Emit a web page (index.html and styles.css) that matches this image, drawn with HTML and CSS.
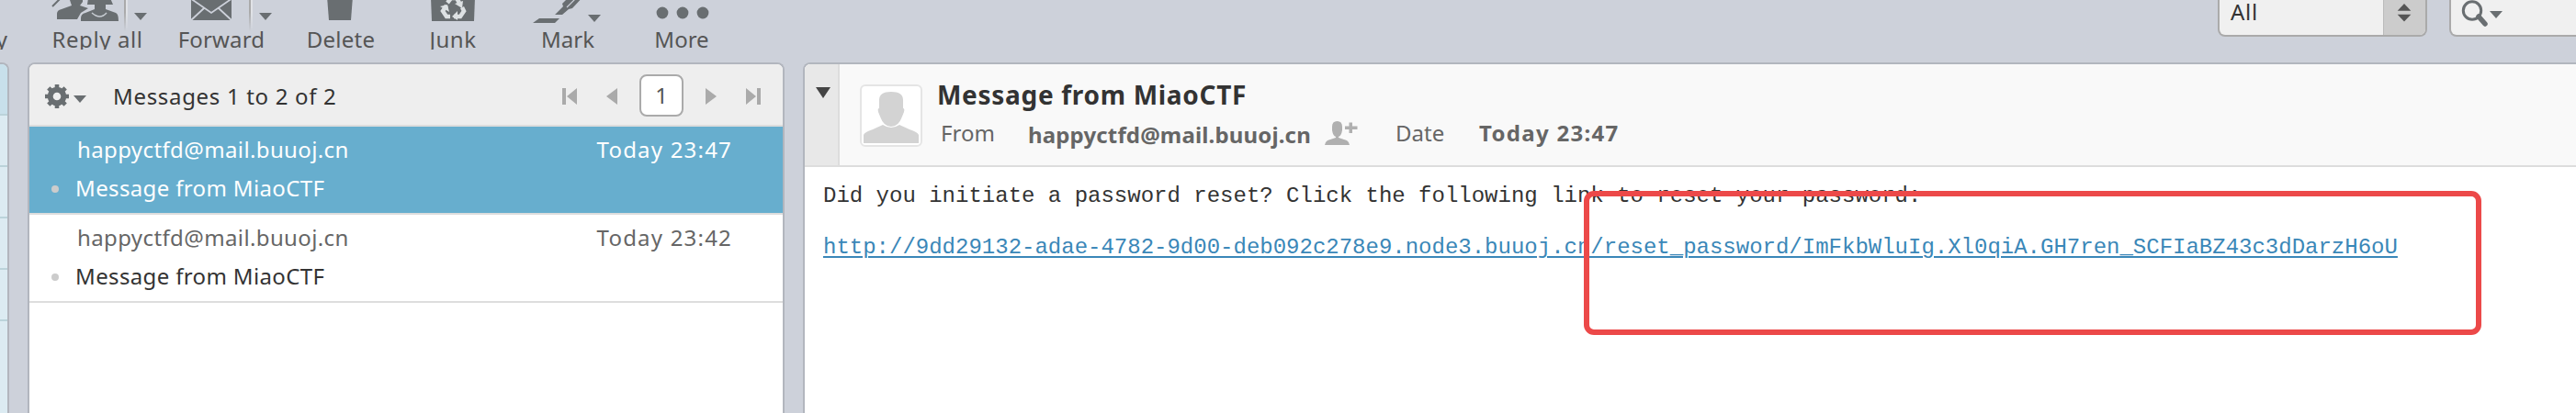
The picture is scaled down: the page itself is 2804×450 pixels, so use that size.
FILE: index.html
```html
<!DOCTYPE html>
<html lang="en">
<head>
<meta charset="utf-8">
<title>Webmail</title>
<link rel="stylesheet" href="styles.css">
</head>
<body>
<div class="app">
  <header class="toolbar">
    <nav class="buttons">
      <div class="button cut"><svg viewBox="0 0 38 27"></svg><span class="label">Reply</span></div>
      <div class="button reply-all">
        <svg viewBox="38 0 134 27">
          <path d="M57 7 66-2" stroke="#696e71" stroke-width="2"/>
          <path d="M75-3h15v5l-3 4 9 3-8 5-4 7H62v-6q0-4 5-5l11-4z"/>
          <path d="M96-2h24l3 7h-8v5l11 4q3 1 3 9H88v-3q0-5 5-6l10-4V5h-8z"/>
          <path d="M100 14q9 8 16 0" fill="none" stroke="#c9ced4" stroke-width="1.5"/>
          <path d="M146 14h14l-7 8z"/>
        </svg><i class="rule"></i>
        <span class="label">Reply all</span>
      </div>
      <div class="button forward">
        <svg viewBox="172 0 138 27">
          <path d="M208-4h44v26h-44z"/>
          <path d="M207-2 230 14 253-2M208 22l14-13M252 22 238 9" fill="none" stroke="#cdd1da" stroke-width="1.8"/>
          <path d="M282 14h14l-7 8z"/>
        </svg><i class="rule"></i>
        <span class="label">Forward</span>
      </div>
      <div class="button delete">
        <svg viewBox="310 0 122 27"><path d="M356-4h28l-2 26h-24z"/></svg>
        <span class="label">Delete</span>
      </div>
      <div class="button junk">
        <svg viewBox="432 0 122 27">
          <path d="M469-3h48l-1 26h-46z"/>
          <g fill="none" stroke="#dde1e3" stroke-width="4.5"><path d="m487 3 4-5h6l3 5M503 8l2 4-4 6h-7M490 18h-4l-4-6 4-6"/></g>
          <g fill="#dde1e3"><path d="m495 4 9-3-1 8zM498 12v10l-6-4zM479 7l8-2 2 8z"/></g>
        </svg>
        <span class="label">Junk</span>
      </div>
      <div class="button mark">
        <svg viewBox="554 0 128 27">
          <path d="M587 20h22l-5 5h-24z"/>
          <path d="M604 16 613 7 612 4 622-6h15L623 9l-4 1-7 6z"/>
          <path d="M617 8 628-3" stroke="#cdd1da" stroke-width="1.2"/>
          <path d="M640 16h14l-7 8z"/>
        </svg>
        <span class="label">Mark</span>
      </div>
      <div class="button more">
        <svg viewBox="682 0 120 27"><circle cx="721" cy="14" r="6.4"/><circle cx="743" cy="14" r="6.4"/><circle cx="765" cy="14" r="6.4"/></svg>
        <span class="label">More</span>
      </div>
    </nav>
    <div class="filters">
      <div class="select">
        <span class="value">All</span>
        <span class="stepper"><svg viewBox="0 0 46 38"><path d="M15 12 22.500 4 30 12zM15 16h15l-7.500 8z" fill="#555"/></svg></span>
      </div>
      <div class="search">
        <svg viewBox="0 0 60 38"><circle cx="23" cy="11.500" r="9.700" fill="none" stroke="#696e71" stroke-width="3"/><path d="M30 18 37 26" stroke="#696e71" stroke-width="5.500" stroke-linecap="round"/><path d="M42 12h14l-7 8z"/></svg>
      </div>
    </div>
  </header>
  <main class="panes">
    <aside class="folders"><div class="folder current"></div><div class="folder"></div><div class="folder"></div><div class="folder"></div><div class="folder"></div></aside>
    <section class="list">
      <div class="list-head">
        <svg class="gear" viewBox="0 0 48 30">
          <g transform="translate(14 15)"><circle r="7.300" fill="none" stroke="#696e71" stroke-width="6"/>
          <g stroke="#696e71" stroke-width="4.600"><path d="M0-13V-9M0 9V13M-13 0H-9M9 0H13M-9.200-9.200-6.500-6.500M6.500 6.500 9.200 9.200M-9.200 9.200-6.500 6.500M6.500-6.500 9.200-9.200"/></g></g>
          <path d="M32 14h14l-7 8z"/>
        </svg>
        <span class="count">Messages 1 to 2 of 2</span>
        <div class="pager">
          <svg viewBox="0 0 16 18"><path d="M0 0h4v18H0zM16 0v18L5 9z"/></svg>
          <svg class="prev" viewBox="0 0 12 18"><path d="M12 0v18L0 9z"/></svg>
          <span class="page">1</span>
          <svg class="next" viewBox="0 0 12 18"><path d="M0 0v18l12-9z"/></svg>
          <svg class="last" viewBox="0 0 16 18"><path d="M12 0h4v18h-4zM0 0v18l11-9z"/></svg>
        </div>
      </div>
      <article class="row selected">
        <div class="line"><span class="sender">happyctfd@mail.buuoj.cn</span><time class="when">Today 23:47</time></div>
        <div class="line"><i class="dot"></i><span class="topic">Message from MiaoCTF</span></div>
      </article>
      <article class="row">
        <div class="line"><span class="sender">happyctfd@mail.buuoj.cn</span><time class="when">Today 23:42</time></div>
        <div class="line"><i class="dot"></i><span class="topic">Message from MiaoCTF</span></div>
      </article>
    </section>
    <section class="message">
      <div class="message-head">
        <div class="toggle"><svg viewBox="0 0 16 12"><path d="M0 0h16L8 12z" fill="#444"/></svg></div>
        <svg class="avatar" viewBox="0 0 68 68">
          <rect x="1" y="1" width="66" height="66" rx="5" fill="#fff" stroke="#e5e5e5" stroke-width="2"/>
          <path d="M21 17q0-9 13-9t13 9v9q2 0 1 4l-2 5q-4 11-12 11T22 35l-2-5q-1-4 1-4z" fill="#d3d3d3"/>
          <path d="M4 64V55q1-3 10-6l11-5q9 6 18 0l11 5q9 3 10 6v9z" fill="#d3d3d3"/>
        </svg>
        <div class="summary">
          <h1 class="subject">Message from MiaoCTF</h1>
          <div class="meta">
            <span class="key">From</span>
            <span class="from">happyctfd@mail.buuoj.cn</span>
            <svg class="add" viewBox="0 0 36 26"><path d="M8 6q0-6 5.500-6T19 6v4q-1 6-4 7v1l9 3q3 2 3 5H0q0-3 3-5l9-3v-1Q9 16 8 10zM26.500 1.500h3.500v4h5.500V9H30v4h-3.500V9H22V5.500h4.500z" fill="#b0b0b0"/></svg>
            <span class="key date-key">Date</span>
            <time class="date">Today 23:47</time>
          </div>
        </div>
      </div>
      <div class="body">
        <p class="text">Did you initiate a password reset? Click the following link to reset your password:</p>
        <p class="text"><a class="link">http://9dd29132-adae-4782-9d00-deb092c278e9.node3.buuoj.cn/reset_password/ImFkbWluIg.Xl0qiA.GH7ren_SCFIaBZ43c3dDarzH6oU</a></p>
        <div class="marker"></div>
      </div>
    </section>
  </main>
</div>
</body>
</html>
```
FILE: styles.css
```css
* { box-sizing: border-box; }
body { margin: 0; background: #cdd1da; }
svg { display: block; fill: #696e71; flex: none; }
.app {
  width: 2804px; height: 450px; overflow: hidden;
  display: flex; flex-direction: column;
  font: 24px/32px "Noto Sans", sans-serif; color: #333; white-space: nowrap;
}

/* Toolbar */
.toolbar { height: 68px; flex: none; display: flex; }
.buttons { display: grid; grid-template-columns: 38px 134px 138px 122px 122px 128px 120px; }
.button { position: relative; color: #555; }
.button svg { width: 100%; height: 27px; overflow: visible; }
.label { display: flex; justify-content: center; height: 32px; }
.cut .label, .reply-all .label, .junk .label { height: 27px; overflow: hidden; }
.cut .label { justify-content: flex-end; padding-right: 30px; overflow: clip; }
.reply-all .label { letter-spacing: .6px; padding-left: 2px; }
.forward .label { letter-spacing: .15px; }
.delete .label { letter-spacing: .25px; }
.junk .label { letter-spacing: .5px; }
.rule {
  position: absolute; top: 0; left: 97px; width: 4px; height: 34px;
  background: linear-gradient(90deg, #aaa 50%, #e0e2e6 50%);
  -webkit-mask-image: linear-gradient(#000 40%, transparent);
  mask-image: linear-gradient(#000 40%, transparent);
}
.forward .rule { left: 99px; }
.filters { display: flex; gap: 24px; margin-left: 1612px; height: 40px; }
.select, .search { border: 2px solid #aaa; border-top: 0; background: #f0f0f0; }
.select { width: 228px; display: flex; justify-content: space-between; border-radius: 0 0 8px 8px; overflow: hidden; }
.value { margin: -3px 0 0 12px; letter-spacing: .7px; }
.stepper { width: 46px; background: #ccc; border-left: 1px solid #bbb; }
.search { width: 400px; border-radius: 0 0 8px 8px; }
.search svg { width: 60px; height: 38px; }

/* Panes */
.panes { display: flex; flex: 1; min-height: 0; }
.folders {
  width: 10px; margin-right: 20px; background: #dcebf2;
  border: solid #b2b6be; border-width: 2px 2px 0 0; border-top-right-radius: 8px; overflow: hidden;
}
.folder { height: 56px; border-bottom: 2px solid #bbd3da; }
.folder.current { background: #c8e0eb; }

.list {
  width: 824px; margin-right: 20px; background: #fff;
  border: 2px solid #b2b6be; border-bottom: 0; border-radius: 8px 8px 0 0; overflow: hidden;
}
.list-head { height: 68px; display: flex; align-items: center; padding-left: 16px; background: #eee; border-bottom: 2px solid #ddd; }
.gear { width: 48px; height: 30px; margin-top: 3px; }
.count { margin: 3px 0 0 27px; letter-spacing: .68px; }
.pager { display: flex; align-items: center; margin: 1px 24px 0 auto; }
.pager svg { width: 16px; height: 18px; fill: #aaa; margin-top: 3px; }
.pager .prev { width: 12px; margin-left: 32px; }
.pager .next { width: 12px; }
.pager .last { margin-left: 32px; }
.page {
  width: 48px; height: 46px; margin: 0 24px; padding-top: 5px; text-align: center;
  border: 2px solid #aaa; border-radius: 8px; background: #fff; color: #555;
}
.row { height: 96px; padding-top: 4px; border-bottom: 2px solid #ddd; }
.line { display: flex; align-items: center; height: 42px; line-height: 42px; }
.sender { margin-left: 52px; color: #666; letter-spacing: .38px; }
.when { margin: 0 55px 0 auto; color: #666; letter-spacing: 1.2px; }
.dot { width: 8px; height: 8px; margin: 1px 18px 0 24px; border-radius: 50%; background: #ccc; }
.topic { letter-spacing: .36px; }
.selected { background: #67aece; }
.selected .sender, .selected .when, .selected .topic { color: #fff; }

.message { flex: 1; background: #fff; border: solid #b2b6be; border-width: 2px 0 0 2px; border-top-left-radius: 8px; overflow: hidden; }
.message-head { height: 112px; display: flex; background: #f9f9f9; border-bottom: 2px solid #ddd; }
.toggle { width: 38px; background: #e8e8e8; border-right: 2px solid #ddd; padding: 25px 0 0 12px; }
.toggle svg { width: 16px; height: 12px; }
.avatar { width: 68px; height: 68px; margin: 22px 0 0 22px; }
.summary { margin-left: 16px; padding-top: 12px; }
.subject { margin: 0; height: 43px; font-size: 28px; line-height: 42px; letter-spacing: .7px; }
.meta { display: flex; color: #666; }
.meta .key { padding-top: 4px; width: 95px; margin-left: 4px; line-height: 32px; }
.from { padding-top: 6px; font-weight: bold; letter-spacing: .15px; width: 323px; }
.add { width: 36px; height: 26px; margin-top: 7px; }
.meta .date-key { margin-left: 41px; width: 91px; }
.date { padding-top: 4px; font-weight: bold; letter-spacing: 1.3px; }

.body { position: relative; padding: 4px 20px; font-family: "Liberation Mono", monospace; line-height: 56px; }
.text { margin: 0; }
.link { color: #3a87b8; text-decoration: underline 2px; text-underline-offset: 3px; }
.marker { position: absolute; left: 848px; top: 26px; width: 977px; height: 157px; border: 6px solid #ec4949; border-radius: 11px; }
```
